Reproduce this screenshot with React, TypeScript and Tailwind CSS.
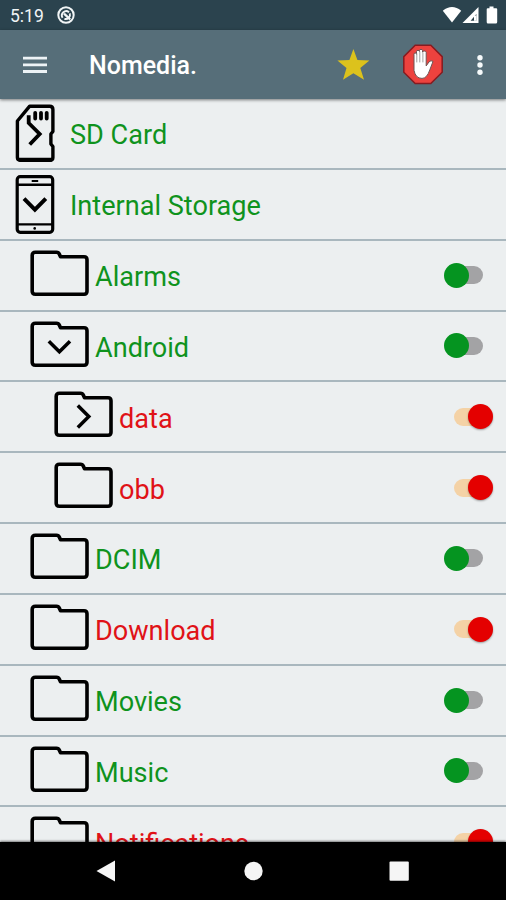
import React from "react";

type Kind = "sd" | "phone" | "folder";
type Arrow = "right" | "down" | undefined;
interface Item {
  name: string;
  kind: Kind;
  arrow?: Arrow;
  level: 0 | 1 | 2;
  hidden?: boolean;
}

const items: Item[] = [
  { name: "SD Card", kind: "sd", level: 0 },
  { name: "Internal Storage", kind: "phone", level: 0 },
  { name: "Alarms", kind: "folder", level: 1 },
  { name: "Android", kind: "folder", arrow: "down", level: 1 },
  { name: "data", kind: "folder", arrow: "right", level: 2, hidden: true },
  { name: "obb", kind: "folder", level: 2, hidden: true },
  { name: "DCIM", kind: "folder", level: 1 },
  { name: "Download", kind: "folder", level: 1, hidden: true },
  { name: "Movies", kind: "folder", level: 1 },
  { name: "Music", kind: "folder", level: 1 },
  { name: "Notifications", kind: "folder", level: 1, hidden: true },
];

const indent = { 0: "pl-[14px]", 1: "pl-[29px]", 2: "pl-[53px]" };

function SdIcon() {
  return (
    <svg className="w-[56px] h-[70px] shrink-0" viewBox="0.3 1 56 70" fill="none" stroke="#000" strokeWidth="3.4">
      <path d="M16 8.2H36Q39.2 8.2 39.2 11.4V33.5L37.2 36V46L39.2 48.5V59.5Q39.2 62.2 36.5 62.2H6.5Q3.7 62.2 3.7 59.5V23Z" strokeLinejoin="round" />
      <path d="M5 61.8H38.5" strokeWidth="4" />
      <path d="M21.5 14.8V20.6M27.3 14.8V20.6M33 14.8V20.6" strokeWidth="3.8" strokeLinecap="round" />
      <path d="M15 17.2V25L26 36L16 46.5" strokeWidth="3.8" />
    </svg>
  );
}

function PhoneIcon() {
  return (
    <svg className="w-[56px] h-[70px] shrink-0" viewBox="0.3 1 56 70" fill="none" stroke="#000" strokeWidth="3.2">
      <rect x="3.5" y="7.7" width="35.5" height="55.6" rx="3" />
      <path d="M4 15.7H39M4 55.4H39" strokeWidth="2.4" />
      <path d="M18 12H24.5" strokeWidth="2" />
      <circle cx="21" cy="59.4" r="1.3" fill="#000" stroke="none" />
      <path d="M10.3 29.7L21.2 40.6L32.1 29.7" strokeWidth="4" />
    </svg>
  );
}

function FolderIcon({ arrow }: { arrow: Arrow }) {
  return (
    <svg className="w-[66px] h-[70px] shrink-0" viewBox="0 0.2 66 70" fill="none" stroke="#000" strokeWidth="3.6">
      <path d="M6.4 11.5H27.5Q29.6 11.5 30.4 13.4L31.5 15.9H55Q58 15.9 58 18.9V50.4Q58 53.4 55 53.4H6.4Q3.2 53.4 3.2 50.4V14.5Q3.2 11.5 6.4 11.5Z" strokeLinejoin="round" />
      {arrow === "down" && <path d="M19.8 29.4L30.4 40L41 29.4" strokeWidth="3.5" />}
      {arrow === "right" && <path d="M24.8 23.6L35.8 34.6L24.8 45.6" strokeWidth="3.5" />}
    </svg>
  );
}

function Toggle({ on }: { on?: boolean }) {
  return on ? (
    <div className="ml-auto mr-[13px] mt-[21.4px] flex h-[26px] w-[39px] items-center rounded-full">
      <div className="h-[18px] w-[24px] shrink-0 rounded-l-full bg-[#f4d2a6]" />
      <div className="-ml-[10px] size-[25px] shrink-0 rounded-full bg-[#e40000] shadow-[0_1px_2px_rgba(0,0,0,0.35)]" />
    </div>
  ) : (
    <div className="ml-auto mr-[23px] mt-[21.4px] flex h-[26px] w-[39px] items-center">
      <div className="relative size-[25px] shrink-0 rounded-full bg-[#059420]" />
      <div className="-ml-[10px] h-[18px] w-[24px] shrink-0 rounded-r-full bg-[#a3a3a5]" />
    </div>
  );
}

function Row({ item }: { item: Item }) {
  return (
    <div className="flex h-[70.85px] shrink-0 flex-col">
      <div className={`flex min-h-0 flex-1 items-start overflow-hidden ${indent[item.level]}`}>
        {item.kind === "sd" && <SdIcon />}
        {item.kind === "phone" && <PhoneIcon />}
        {item.kind === "folder" && <FolderIcon arrow={item.arrow} />}
        <span className={`mt-[20.4px] whitespace-nowrap text-[27.1px] leading-[32px] ${item.hidden ? "text-[#e01217]" : "text-[#0f931d]"}`}>
          {item.name}
        </span>
        {item.level > 0 && <Toggle on={item.hidden} />}
      </div>
      <div className="h-[2px] shrink-0 bg-[#a9b7be]" />
    </div>
  );
}

function StatusBar() {
  return (
    <div className="flex h-[30px] shrink-0 items-center bg-[#2b434e] pl-[10px] text-[#f1f5f6]">
      <span className="w-[47px] pt-[2px] text-[17.5px] leading-[30px]">5:19</span>
      <svg className="size-[18px]" viewBox="0 0 18 18" fill="none" stroke="#f1f5f6">
        <circle cx="9" cy="9" r="7.7" strokeWidth="2" />
        <path d="M5.6 11.8A4.3 4.3 0 0 1 12 6.2M12.8 7.4A4.3 4.3 0 0 1 7.4 12.8" strokeWidth="1.9" />
        <path d="M7 7.6L13.2 13.4" strokeWidth="2.2" />
      </svg>
      <svg className="ml-auto mr-[7px] h-[20px] w-[57px]" viewBox="0 0 57 20" fill="#fff">
        <path d="M.8 5.7Q10 -1.8 19.2 5.7L10 17.5Z" />
        <path fillRule="evenodd" d="M36.5 2V18H20.5ZM34.4 9L28.6 15.8H34.4Z" />
        <path d="M32 10.5H34.5V15.8H32Z" />
        <path d="M47.5 1.5H51.5V3.2H54.2Q55.2 3.2 55.2 4.3V17Q55.2 18.5 53.7 18.5H46Q44.7 18.5 44.7 17V4.3Q44.7 3.2 45.7 3.2H47.5Z" />
      </svg>
    </div>
  );
}

function AppBar() {
  return (
    <div className="z-10 flex h-[69px] shrink-0 items-center bg-[#566e79] pl-[23px] shadow-[0_1px_3px_rgba(0,0,0,0.5)]">
      <svg className="h-[20px] w-[24px]" viewBox="0 0 24 20" stroke="#edf3f6" strokeWidth="2.8">
        <path d="M0 3.1H24M0 9.8H24M0 16.5H24" />
      </svg>
      <span className="ml-[42px] pt-[2px] text-[25px] font-medium leading-[30px] text-white">Nomedia.</span>
      <svg className="ml-auto size-[34px]" viewBox="0 0 34 34" fill="#dcc21c">
        <path d="M17.4 1L21.4 11.9L33.4 12.4L24.3 20L28 31.8L17.4 25.2L7 31.8L10.5 20L1.4 12.4L13.4 11.9Z" />
      </svg>
      <svg className="ml-[32px] size-[42px]" viewBox="0 0.6 42 42">
        <path d="M13.2 1.8H28.8L40.2 13.2V28.8L28.8 40.2H13.2L1.8 28.8V13.2Z" fill="#ed423e" stroke="#861b20" strokeWidth="1.5" />
        <path d="M12 11Q12 9.5 13.2 9.5T14.5 11V8.2Q14.5 7 16 7T17.5 8.2V7.2Q17.5 6 19 6T20.5 7.2V8.8Q20.5 7.6 22.2 7.6T24.2 9V22.5L27 18.5Q29 16.5 31 18L27.8 26.5Q25 35 20 35Q13.5 35 12 27Z" fill="#fff" stroke="#6e5555" strokeWidth="1" />
        <path d="M14.8 10V19M17.8 8V19M20.9 9V19" stroke="#a0a0a0" strokeWidth="1" />
      </svg>
      <svg className="ml-[32px] mr-[22px] h-[24px] w-[8px]" viewBox="0 0 8 24" fill="#f6fafb">
        <circle cx="4" cy="4.8" r="2.7" />
        <circle cx="4" cy="12" r="2.7" />
        <circle cx="4" cy="19.2" r="2.7" />
      </svg>
    </div>
  );
}

export default function App() {
  return (
    <div className="flex h-[900px] w-[506px] flex-col overflow-hidden bg-[#eceff0] font-[Roboto,sans-serif]">
      <StatusBar />
      <AppBar />
      <main className="flex min-h-0 flex-1 flex-col overflow-hidden">
        {items.map((item) => (
          <Row key={item.name} item={item} />
        ))}
      </main>
      <nav className="z-10 flex h-[58px] shrink-0 items-center bg-black shadow-[0_-1px_2px_rgba(0,0,0,0.5)]">
        <svg className="h-[22px] w-full" viewBox="0 0 506 22" fill="#f5f5f5">
          <path d="M115 .5V21.5L96.5 11Z" />
          <circle cx="253.5" cy="11" r="9.2" />
          <rect x="389.5" y="1.5" width="19.3" height="19.3" rx="1" />
        </svg>
      </nav>
    </div>
  );
}
